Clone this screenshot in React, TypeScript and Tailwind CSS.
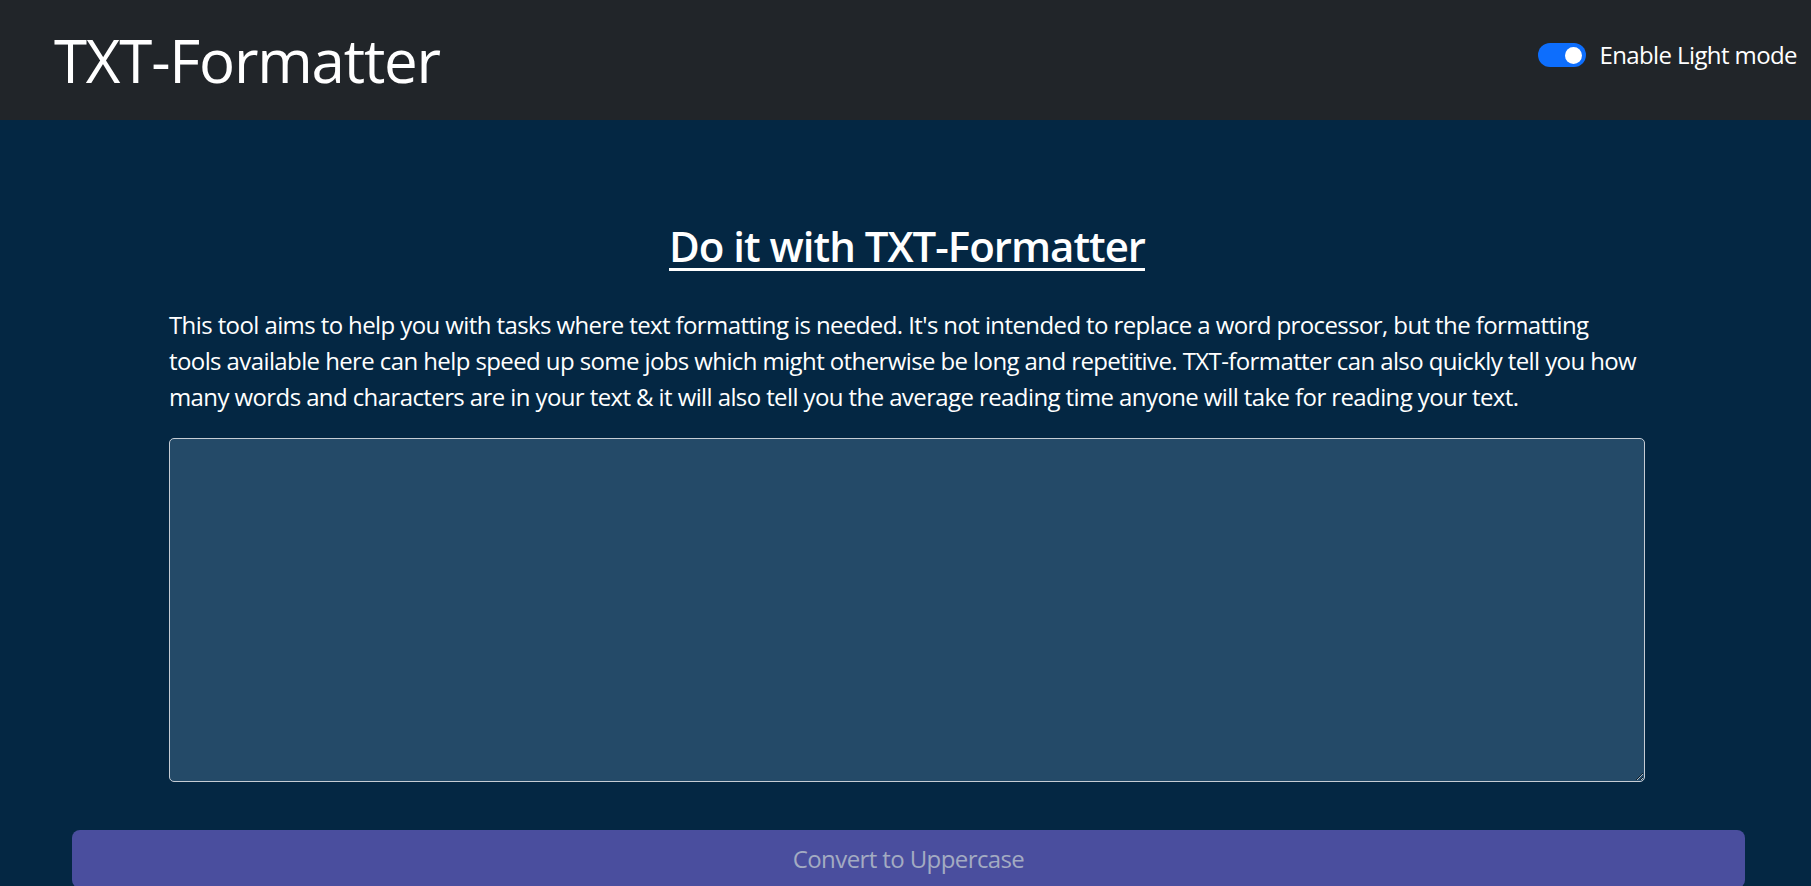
import React from "react";

export default function App() {
  const font = { fontFamily: '"Open Sans", "Noto Sans", sans-serif' };
  return (
    <div className="min-h-screen bg-[#042743]" style={font}>
      <header className="h-[120px] bg-[#212529] flex items-center justify-between pl-[54px] pr-[14px]">
        <div className="text-[60px] leading-none text-white tracking-[-1.2px]">TXT-Formatter</div>
        <label className="flex items-center gap-[13px] mb-[10px]">
          <span className="w-[48px] h-[24px] rounded-full bg-[#0d6efd] flex items-center justify-end pr-[4px]">
            <span className="w-[17px] h-[17px] rounded-full bg-white" />
          </span>
          <span className="text-[24px] leading-[36px] text-white tracking-[-0.6px]">Enable Light mode</span>
        </label>
      </header>
      <main className="pt-[101px]">
        <div className="w-[1476px] ml-[169px]">
          <h2 className="text-center text-[42px] leading-[1.2] font-semibold text-white mb-[36px] tracking-[-1px]">
            <span className="underline decoration-[3px] underline-offset-[6px]">Do it with TXT-Formatter</span>
          </h2>
          <p className="text-[24px] leading-[36px] text-white tracking-[-0.6px]">
            <span className="block whitespace-nowrap">This tool aims to help you with tasks where text formatting is needed. It's not intended to replace a word processor, but the formatting</span>
            <span className="block whitespace-nowrap">tools available here can help speed up some jobs which might otherwise be long and repetitive. TXT-formatter can also quickly tell you how</span>
            <span className="block whitespace-nowrap">many words and characters are in your text &amp; it will also tell you the average reading time anyone will take for reading your text.</span>
          </p>
          <textarea className="block mt-[23px] w-full h-[344px] bg-[#244a68] border border-[#c6ccd4] rounded-[5px] text-white text-[24px] p-[9px] outline-none" />
        </div>
        <div className="pt-[48px] pb-[40px] pl-[72px] pr-[66px]">
          <button className="w-full h-[58px] rounded-[8px] bg-[#4a4e9e] text-[#a3abc2] text-[24px] tracking-[-0.6px]">
            Convert to Uppercase
          </button>
        </div>
      </main>
    </div>
  );
}
